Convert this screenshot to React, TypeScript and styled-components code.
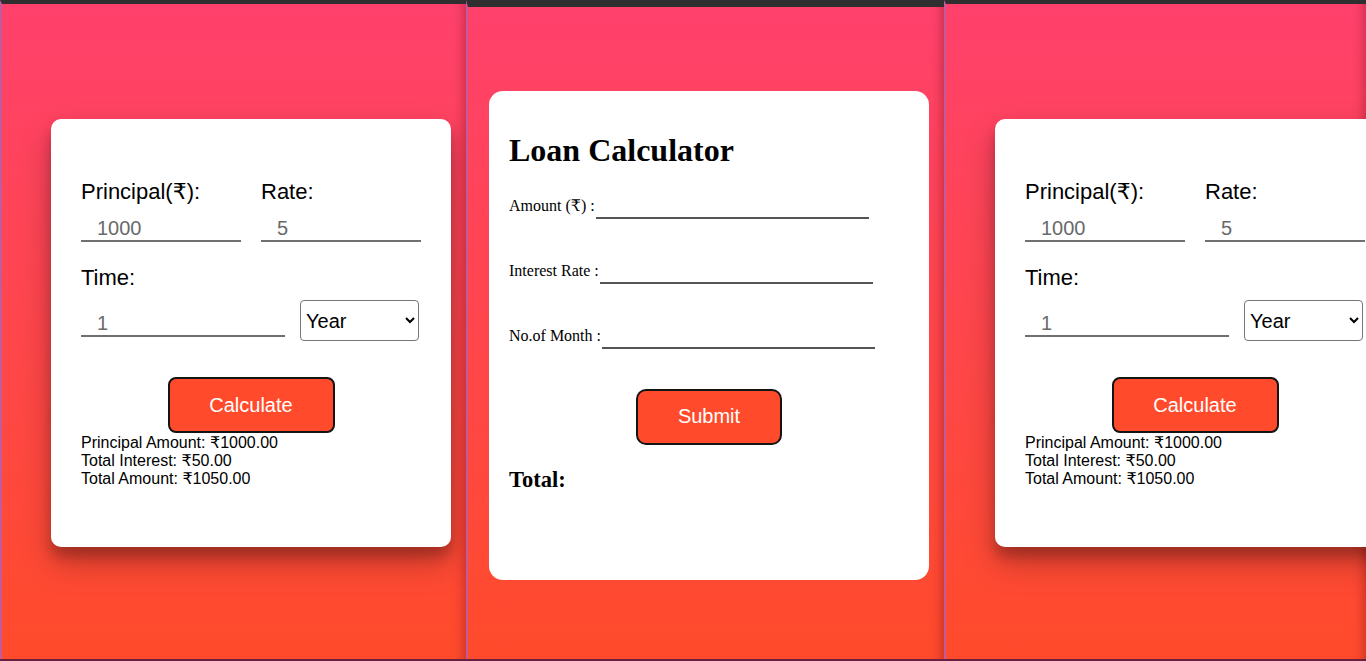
import React from "react";
import styled, { createGlobalStyle } from "styled-components";

const GlobalStyle = createGlobalStyle`
  html, body { margin: 0; padding: 0; overflow: hidden; background: #6a1f3e; }
  * { box-sizing: border-box; }
`;

const Stage = styled.div`
  display: flex;
  width: 1366px;
  height: 661px;
  overflow: hidden;
  border-bottom: 2px solid #6a1f3e;
`;

const Panel = styled.div<{ $w: number; $bar: number; $top: number; $left: number }>`
  flex: 0 0 ${(p) => p.$w}px;
  width: ${(p) => p.$w}px;
  display: flex;
  align-items: flex-start;
  padding-top: ${(p) => p.$top}px;
  padding-left: ${(p) => p.$left}px;
  border-top: ${(p) => p.$bar}px solid #2f2f2f;
  border-left: 2px solid #c25a9c;
  background: linear-gradient(to bottom, #ff416c, #ff4b2b);
  box-shadow: inset -12px 0 12px -10px rgba(90, 0, 20, 0.35);
  overflow: hidden;
`;

const CalcCard = styled.div`
  flex: 0 0 400px;
  width: 400px;
  height: 428px;
  background: #fff;
  border-radius: 10px;
  padding: 60px 30px 0;
  box-shadow: 0 16px 32px rgba(0, 0, 0, 0.25), 0 10px 12px rgba(0, 0, 0, 0.2);
  font-family: "Liberation Sans", Arial, "DejaVu Sans", sans-serif;
  color: #000;
`;

const TopRow = styled.div`
  display: grid;
  grid-template-columns: 160px 160px;
  column-gap: 20px;
  margin-bottom: 23px;
`;

const Field = styled.div`
  display: flex;
  flex-direction: column;
`;

const FieldLabel = styled.label`
  font-size: 22px;
  line-height: 26px;
`;

const UnderInput = styled.input<{ $w: number }>`
  width: ${(p) => p.$w}px;
  border: none;
  border-bottom: 2px solid #707070;
  outline: none;
  padding: 12px 0 0 16px;
  font-family: "Liberation Sans", Arial, "DejaVu Sans", sans-serif;
  font-size: 20px;
  line-height: 23px;
  height: 37px;
  color: #6a6a6a;
  background: transparent;
`;

const TimeRow = styled.div`
  display: flex;
  align-items: flex-start;
  gap: 15px;
  margin-top: 9px;
`;

const UnitSelect = styled.select`
  width: 119px;
  height: 41px;
  font-family: "Liberation Sans", Arial, "DejaVu Sans", sans-serif;
  font-size: 20px;
  color: #000;
  background: #fff;
  border: 1px solid #767676;
  border-radius: 4px;
  padding-left: 1px;
`;

const ActionButton = styled.button<{ $w: number; $r: number }>`
  display: block;
  width: ${(p) => p.$w}px;
  height: 56px;
  margin: 0 auto;
  background: #ff4b2b;
  color: #fff;
  border: 2px solid #141414;
  border-radius: ${(p) => p.$r}px;
  font-family: "Liberation Sans", Arial, "DejaVu Sans", sans-serif;
  font-size: 20px;
`;

const CalcButtonWrap = styled.div`
  margin-top: 36px;
`;

const Results = styled.div`
  font-size: 16px;
  line-height: 18px;
  color: #000;
  margin-top: 1px;
`;

const LoanCard = styled.div`
  flex: 0 0 440px;
  width: 440px;
  height: 489px;
  background: #fff;
  border-radius: 14px;
  padding: 20px;
  font-family: "Liberation Serif", "Times New Roman", "DejaVu Serif", serif;
  color: #000;
`;

const Title = styled.h1`
  font-size: 32px;
  font-weight: bold;
  line-height: 37px;
  margin: 21.4px 0 23.5px;
`;

const LineRow = styled.div`
  display: flex;
  align-items: flex-end;
  gap: 1px;
  height: 26px;
  margin-bottom: 39px;
  &:last-of-type {
    margin-bottom: 40px;
  }
`;

const LineLabel = styled.label`
  font-size: 16px;
  line-height: 18px;
  margin-bottom: 4px;
  white-space: nowrap;
`;

const LineInput = styled.input`
  width: 273px;
  height: 26px;
  border: none;
  border-bottom: 2px solid #555;
  outline: none;
  background: transparent;
  font-size: 16px;
`;

const TotalText = styled.div`
  font-size: 22.5px;
  font-weight: bold;
  line-height: 26px;
  margin-top: 22px;
`;

const Calculator: React.FC = () => (
  <CalcCard>
    <TopRow>
      <Field>
        <FieldLabel>Principal(₹):</FieldLabel>
        <UnderInput $w={160} defaultValue="1000" />
      </Field>
      <Field>
        <FieldLabel>Rate:</FieldLabel>
        <UnderInput $w={160} defaultValue="5" />
      </Field>
    </TopRow>
    <Field>
      <FieldLabel>Time:</FieldLabel>
      <TimeRow>
        <UnderInput $w={204} defaultValue="1" />
        <UnitSelect defaultValue="Year">
          <option>Year</option>
          <option>Month</option>
        </UnitSelect>
      </TimeRow>
    </Field>
    <CalcButtonWrap>
      <ActionButton $w={167} $r={8}>Calculate</ActionButton>
    </CalcButtonWrap>
    <Results>
      <div>Principal Amount: ₹1000.00</div>
      <div>Total Interest: ₹50.00</div>
      <div>Total Amount: ₹1050.00</div>
    </Results>
  </CalcCard>
);

const LoanCalculator: React.FC = () => (
  <LoanCard>
    <Title>Loan Calculator</Title>
    <div>
      <LineRow>
        <LineLabel>Amount (₹) :</LineLabel>
        <LineInput />
      </LineRow>
      <LineRow>
        <LineLabel>Interest Rate :</LineLabel>
        <LineInput />
      </LineRow>
      <LineRow>
        <LineLabel>No.of Month :</LineLabel>
        <LineInput />
      </LineRow>
    </div>
    <ActionButton $w={146} $r={10}>Submit</ActionButton>
    <TotalText>Total:</TotalText>
  </LoanCard>
);

export default function App() {
  return (
    <>
      <GlobalStyle />
      <Stage>
        <Panel $w={466} $bar={4} $top={115} $left={49}>
          <Calculator />
        </Panel>
        <Panel $w={478} $bar={7} $top={84} $left={21}>
          <LoanCalculator />
        </Panel>
        <Panel $w={422} $bar={4} $top={115} $left={49}>
          <Calculator />
        </Panel>
      </Stage>
    </>
  );
}
